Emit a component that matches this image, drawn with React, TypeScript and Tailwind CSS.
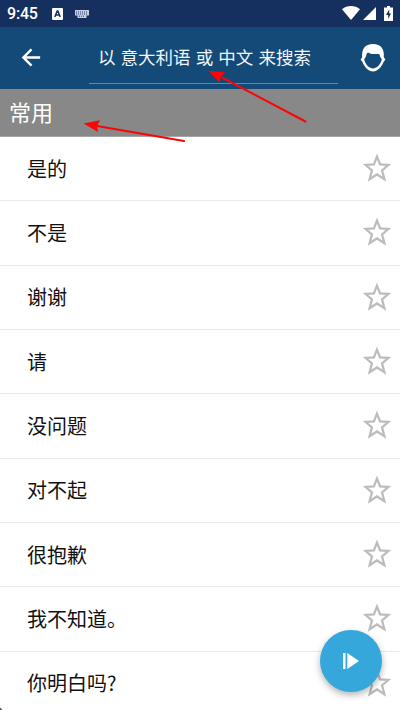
import React from "react";

const phrases = ["是的", "不是", "谢谢", "请", "没问题", "对不起", "很抱歉", "我不知道。", "你明白吗?"];

function StatusBar() {
  return (
    <div className="flex h-[27px] shrink-0 items-center bg-[#15305f] pl-[7px] pr-[7px] text-white">
      <span className="w-[31px] whitespace-nowrap font-[Roboto] text-[16px] font-medium leading-none tracking-[-0.2px]">9:45</span>
      <svg className="ml-[14px]" width="11" height="12" viewBox="0 0 11 12">
        <rect width="11" height="12" rx="1" fill="#fff" />
        <path d="M2.8 9 5.2 3h.7l2.3 6M3.8 7h3.5" fill="none" stroke="#15305f" strokeWidth="1.5" />
      </svg>
      <svg className="ml-3" width="14" height="8" viewBox="0 0 14 8">
        <path d="M0 0h14v5.5h-2.5V8h-9V5.5H0z" fill="#c4cede" />
        <path d="M1 2h12M1 4h12M4 6.2h6" stroke="#15305f" strokeWidth=".9" strokeDasharray="1 1" />
      </svg>
      <div className="flex-1" />
      <svg className="mb-[1px]" width="18" height="14" viewBox="0 0 18 14">
        <path d="M0 3.2C5-1 13-1 18 3.2L9 14z" fill="#fff" />
      </svg>
      <svg className="ml-[3px]" width="13" height="13" viewBox="0 0 13 13">
        <path d="M13 0v13H0z" fill="#fff" />
      </svg>
      <svg className="mb-[1px] ml-2" width="9" height="15" viewBox="0 0 9 15">
        <path d="M3 0h3v1.5h3V15H0V1.5h3z" fill="#fff" />
        <path d="M5.2 3.5 2 9h2.2v4L7 7.4H5.2z" fill="#15305f" />
      </svg>
    </div>
  );
}

function SearchHeader() {
  return (
    <div className="flex h-[62px] shrink-0 items-start bg-[#144a78]">
      <svg className="ml-[19px] mt-[18px] shrink-0" width="25" height="25" viewBox="0 0 24 24">
        <path d="M20.3 12H4.2M12 4.2 4.2 12l7.8 7.8" fill="none" stroke="#fff" strokeWidth="2.3" />
      </svg>
      <div className="ml-[45px] flex h-[57px] w-[249px] shrink-0 items-center border-b border-[#6389aa] pl-[9px] pt-[3px]">
        <span className="whitespace-pre text-[17.5px] leading-none text-[#f2f6fa] [word-spacing:1.2px]">以 意大利语 或 中文 来搜索</span>
      </div>
      <svg className="ml-[22px] mt-[17px] shrink-0" width="26" height="28" viewBox="0 0 26 28">
        <path
          d="M2.200 13.200C1.400 5 5 0 13 0S24.600 5 23.800 13.200L25.400 15.500 23.400 18.300C21.300 23.500 17.500 27.400 13 27.400S4.700 23.500 2.600 18.300L.6 15.500z"
          fill="#fff"
        />
        <path
          d="M4.200 15C5.600 13.800 6.200 12 6.700 9.600 7.400 8.700 8.600 8.500 9.400 9.100 10 9.900 11 10 12 10H19.300C19.800 12 20.400 13.900 21.800 15 21.200 19.800 17.100 24.400 13 24.400S4.800 19.800 4.200 15z"
          fill="#144a78"
        />
      </svg>
    </div>
  );
}

function Star() {
  return (
    <svg className="mb-[1px]" width="30" height="30" viewBox="0 0 28 28">
      <path
        d="M14 3.400 16.900 10.700 24.600 11.200 18.700 16.200 20.900 24.400 14 20 7.100 24.400 9.300 16.200 3.400 11.200 11.100 10.700z"
        fill="none"
        stroke="#bcbcbc"
        strokeWidth="2.1"
        strokeMiterlimit="10"
      />
    </svg>
  );
}

export default function App() {
  return (
    <div className="relative flex h-[710px] w-[400px] flex-col overflow-hidden bg-white font-['Noto_Sans_CJK_SC',sans-serif]">
      <StatusBar />
      <SearchHeader />
      <div className="flex h-[48px] shrink-0 items-center border-b border-[#a5a5a5] bg-[#888888] pb-[4px] pl-[9px] text-[22px] leading-none text-white">
        <span>常用</span>
      </div>
      <div className="flex flex-col">
        {phrases.map((phrase) => (
          <div
            key={phrase}
            className="flex h-[64.33px] shrink-0 items-center justify-between border-b border-[#e9e9e9] pl-[27px] pr-[8px] text-[20px] leading-none text-[#111111]"
          >
            <span>{phrase}</span>
            <Star />
          </div>
        ))}
      </div>
      <button className="absolute left-[320px] top-[630px] flex h-[62px] w-[62px] items-center justify-center rounded-full bg-[#35a7db] shadow-[0_3px_7px_rgba(0,0,0,0.3)]">
        <svg width="16" height="16" viewBox="0 0 16 16" fill="#fff">
          <path d="M0 0h2.500v16H0zM4.300 0 16 8 4.300 16z" />
        </svg>
      </button>
      <svg className="pointer-events-none absolute left-0 top-0" width="400" height="710" viewBox="0 0 400 710">
        <g fill="#fb0505" stroke="#fb0505">
          <path d="M305.500 121.500 223 78M184 141 97 126" fill="none" strokeWidth="2" strokeLinecap="round" />
          <path d="M208.500 70.800 225 72.300 221 76.800 219.500 82.800zM83.500 123.500 100 120.300 97 126 98 132z" stroke="none" />
        </g>
        <path d="M0 707.500 2.500 710H0z" fill="#555" />
      </svg>
    </div>
  );
}
